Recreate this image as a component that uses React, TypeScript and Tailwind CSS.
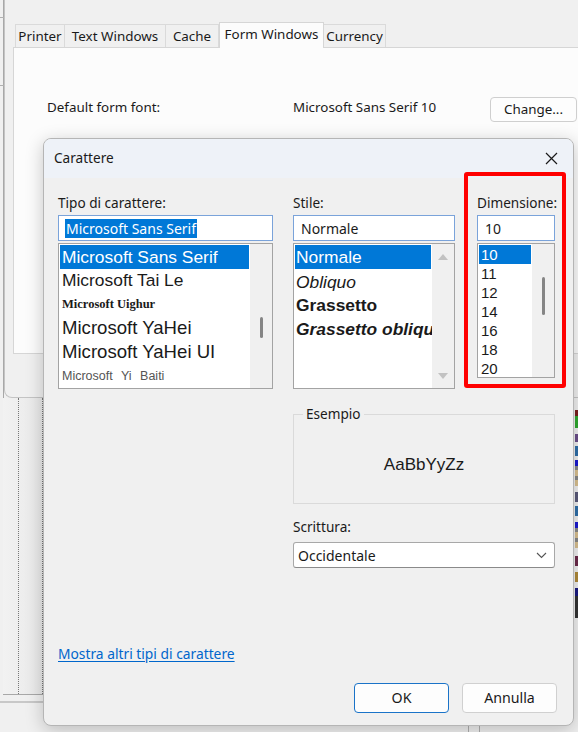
import React from "react";

const ui = "font-['Noto_Sans',sans-serif]";
const arial = "font-['Liberation_Sans',Arial,sans-serif]";

const tabs = [
  { label: "Printer", w: "w-[50px]" },
  { label: "Text Windows", w: "w-[101px]" },
  { label: "Cache", w: "w-[53px]" },
  { label: "Form Windows", w: "w-[105px]", active: true },
  { label: "Currency", w: "w-[62px]" },
];

const sizes = ["10", "11", "12", "14", "16", "18", "20"];

// background property sheet that the font dialog was opened from
const BackWindow: React.FC = () => (
  <div className="absolute left-[4px] top-0 w-[600px] h-[398px] bg-[#f0f0f0] border-l border-b border-[#c4c4c4] rounded-bl-[8px] flex flex-col">
    <div className="flex items-end h-[47px] pl-[10px]">
      {tabs.map((t) =>
        t.active ? (
          <div
            key={t.label}
            className={`${t.w} h-[26px] -mb-px relative z-10 bg-[#fcfcfc] border border-b-0 border-[#d6d6d6] flex items-center justify-center text-[13.4px] text-[#1a1a1a] pb-[3px]`}
          >
            {t.label}
          </div>
        ) : (
          <div
            key={t.label}
            className={`${t.w} h-[23px] bg-[#f0f0f0] border border-b-0 border-l-0 first:border-l border-[#dadada] flex items-center justify-center text-[13.4px] text-[#1a1a1a]`}
          >
            {t.label}
          </div>
        )
      )}
    </div>
    <div className="ml-[8px] h-[307px] bg-[#fcfcfc] border border-[#d6d6d6]">
      <div className="flex items-center mt-[49px] pl-[33px] h-[25px] text-[13.4px] text-[#1a1a1a]">
        <span className="w-[246px] -mt-[4px]">Default form font:</span>
        <span className="w-[197px] -mt-[4px]">Microsoft Sans Serif 10</span>
        <button className="w-[87px] h-[25px] bg-[#fdfdfd] border border-[#cfcfcf] rounded-[4px] text-[13.4px]">
          Change...
        </button>
      </div>
    </div>
  </div>
);

const Scrollbar: React.FC<{ h?: string; mt?: string; arrows?: boolean }> = ({ h, mt, arrows }) => (
  <div className="w-[22px] bg-[#f0f0f0] flex flex-col items-center">
    {arrows ? (
      <>
        <svg width="10" height="6" viewBox="0 0 10 6" className="mt-[10px]">
          <path d="M0 6 L5 0 L10 6 Z" fill="#c2c2c2" />
        </svg>
        <div className="flex-1" />
        <svg width="10" height="6" viewBox="0 0 10 6" className="mb-[9px]">
          <path d="M0 0 L5 6 L10 0 Z" fill="#c2c2c2" />
        </svg>
      </>
    ) : (
      <div className={`${mt} ${h} w-[3px] rounded-full bg-[#858585]`} />
    )}
  </div>
);

const FontDialog: React.FC = () => (
  <div className={`absolute left-[43px] top-[138px] w-[531px] h-[588px] rounded-[8px] bg-[#f0f0f0] border border-[#b5b5b5] shadow-[0_4px_18px_rgba(0,0,0,0.22)] overflow-hidden flex flex-col text-[#1a1a1a] ${ui}`}>
    {/* title bar */}
    <div className="h-[39px] shrink-0 bg-[#eef2f8] flex items-center justify-between pl-[10px] pr-[15px]">
      <span className="text-[13.6px]">Carattere</span>
      <svg width="13" height="13" viewBox="0 0 13 13">
        <path d="M1 1 L12 12 M12 1 L1 12" stroke="#1a1a1a" strokeWidth="1.2" />
      </svg>
    </div>

    {/* annotation box */}
    <div className="absolute left-[420px] top-[33px] w-[102px] h-[216px] border-[4px] border-[#ff0000] rounded-[3px] pointer-events-none" />

    <div className="flex flex-col pl-[14px] flex-1">
      {/* three pickers */}
      <div className="flex mt-[15px]">
        {/* font family */}
        <div className="w-[215px] flex flex-col">
          <div className="h-[20px] leading-[20px] text-[13.6px] mb-[2px]">Tipo di carattere:</div>
          <div className="h-[26px] bg-white border border-[#7aa3da] flex items-center pl-[6px]">
            <span className="bg-[#0078d7] text-white text-[14px] leading-[19px] px-px">Microsoft Sans Serif</span>
          </div>
          <div className="h-[146px] mt-[2px] bg-white border border-[#a3a3a3] flex">
            <div className={`flex-1 flex flex-col pt-px px-px ${arial}`}>
              <div className="h-[24px] bg-[#0078d7] text-white text-[17.4px] leading-[24px] pl-[2px]">Microsoft Sans Serif</div>
              <div className="h-[24px] text-[17.4px] leading-[22px] pl-[2px]">Microsoft Tai Le</div>
              <div className="h-[24px] text-[12.5px] leading-[24px] pl-[2px] font-['Liberation_Serif',serif] font-semibold">Microsoft Uighur</div>
              <div className="h-[24px] text-[18.6px] leading-[24px] pl-[2px]">Microsoft YaHei</div>
              <div className="h-[24px] text-[18.6px] leading-[24px] pl-[2px]">Microsoft YaHei UI</div>
              <div className="h-[24px] text-[12.5px] leading-[24px] pl-[2px] text-[#555] [word-spacing:5px]">Microsoft Yi Baiti</div>
            </div>
            <Scrollbar mt="mt-[73px]" h="h-[21px]" />
          </div>
        </div>

        {/* style */}
        <div className="w-[162px] ml-[20px] flex flex-col">
          <div className="h-[20px] leading-[20px] text-[13.6px] mb-[2px]">Stile:</div>
          <div className="h-[26px] bg-white border border-[#7aa3da] flex items-center pl-[7px] text-[14px]">Normale</div>
          <div className="h-[146px] mt-[2px] bg-white border border-[#a3a3a3] flex">
            <div className={`flex-1 min-w-0 flex flex-col pt-px px-px overflow-hidden whitespace-nowrap ${arial}`}>
              <div className="h-[24px] bg-[#0078d7] text-white text-[17.4px] leading-[24px] pl-px">Normale</div>
              <div className="h-[24px] text-[17.4px] leading-[26px] pl-px italic">Obliquo</div>
              <div className="h-[24px] text-[17.4px] leading-[24px] pl-px font-bold">Grassetto</div>
              <div className="h-[24px] text-[17.4px] leading-[24px] pl-px font-bold italic">Grassetto obliquo</div>
            </div>
            <Scrollbar arrows />
          </div>
        </div>

        {/* size */}
        <div className="w-[78px] ml-[22px] flex flex-col">
          <div className="h-[20px] leading-[20px] text-[13.6px] mb-[2px] whitespace-nowrap">Dimensione:</div>
          <div className="h-[26px] bg-white border border-[#7aa3da] flex items-center pl-[7px] text-[14px]">10</div>
          <div className="h-[135px] mt-[2px] bg-white border border-[#a3a3a3] flex">
            <div className={`flex-1 flex flex-col pt-px px-px ${arial}`}>
              {sizes.map((s, i) => (
                <div
                  key={s}
                  className={`h-[19px] text-[15px] leading-[19px] pl-[2px] ${i === 0 ? "bg-[#0078d7] text-white" : ""}`}
                >
                  {s}
                </div>
              ))}
            </div>
            <Scrollbar mt="mt-[33px]" h="h-[38px]" />
          </div>
        </div>
      </div>

      {/* sample + script */}
      <div className="flex">
        <div className="w-[235px]" />
        <div className="w-[262px] flex flex-col">
          <fieldset className="mt-[16px] h-[99px] border border-[#dadada] text-center">
            <legend className="ml-[9px] px-[3px] text-[13.6px] leading-[18px] text-left">Esempio</legend>
            <div className={`${arial} text-[17px] leading-[20px] pt-[32px]`}>AaBbYyZz</div>
          </fieldset>
          <div className="mt-[13px] h-[20px] leading-[20px] text-[13.6px]">Scrittura:</div>
          <div className="mt-[5px] h-[26px] bg-white border border-[#a8a8a8] border-b-[#8a8a8a] rounded-[3px] flex items-center justify-between pl-[4px] pr-[7px] text-[14px]">
            <span>Occidentale</span>
            <svg width="11" height="7" viewBox="0 0 11 7">
              <path d="M1 1 L5.5 5.5 L10 1" stroke="#555" strokeWidth="1.1" fill="none" />
            </svg>
          </div>
        </div>
      </div>

      <div className="mt-[75px] h-[20px] leading-[20px]">
        <span className="text-[13.8px] text-[#0066cc] underline underline-offset-2">Mostra altri tipi di carattere</span>
      </div>

      <div className="flex justify-end gap-[13px] mt-[20px] pr-[16px]">
        <button className="w-[95px] h-[30px] bg-[#fdfdfd] border-[1.5px] border-[#1a73c8] rounded-[4px] text-[14.2px]">OK</button>
        <button className="w-[95px] h-[30px] bg-[#fdfdfd] border border-[#d0d0d0] rounded-[4px] text-[14.2px]">Annulla</button>
      </div>
    </div>
  </div>
);

const rightStrip = [
  { c: "bg-[#7a2020]", h: "h-[6px]" },
  { c: "bg-[#2ea82e]", h: "h-[12px]" },
  { c: "bg-transparent", h: "h-[6px]" },
  { c: "bg-[#6b4e8a]", h: "h-[8px]" },
  { c: "bg-transparent", h: "h-[4px]" },
  { c: "bg-[#2f6fa8]", h: "h-[10px]" },
  { c: "bg-transparent", h: "h-[4px]" },
  { c: "bg-[#1b1bd0]", h: "h-[6px]" },
  { c: "bg-[#888]", h: "h-[4px]" },
  { c: "bg-[#d9c090]", h: "h-[6px]" },
  { c: "bg-[#888]", h: "h-[4px]" },
  { c: "bg-[#d9c090]", h: "h-[6px]" },
  { c: "bg-transparent", h: "h-[6px]" },
  { c: "bg-[#5a5a7a]", h: "h-[10px]" },
  { c: "bg-transparent", h: "h-[4px]" },
  { c: "bg-[#2f6fa8]", h: "h-[10px]" },
  { c: "bg-transparent", h: "h-[6px]" },
  { c: "bg-[#1b1bd0]", h: "h-[6px]" },
  { c: "bg-[#888]", h: "h-[4px]" },
  { c: "bg-[#d9c090]", h: "h-[6px]" },
  { c: "bg-[#888]", h: "h-[4px]" },
  { c: "bg-[#d9c090]", h: "h-[6px]" },
  { c: "bg-transparent", h: "h-[8px]" },
  { c: "bg-[#6b2a4a]", h: "h-[10px]" },
  { c: "bg-transparent", h: "h-[6px]" },
  { c: "bg-[#b08a3a]", h: "h-[10px]" },
  { c: "bg-transparent", h: "h-[6px]" },
  { c: "bg-[#1b1b80]", h: "h-[8px]" },
  { c: "bg-[#333]", h: "h-[22px]" },
];

export default function App() {
  return (
    <div className={`relative w-[578px] h-[732px] overflow-hidden bg-[#f0f0f0] ${ui}`}>
      {/* underlying application */}
      <div className="absolute left-[3px] top-0 w-px h-[694px] bg-[#a8a8a8]" />
      <div className="absolute left-0 top-[17px] w-[4px] h-px bg-[#b0b0b0]" />
      <div className="absolute left-0 top-[85px] w-[4px] h-px bg-[#b0b0b0]" />
      <div className="absolute left-[3px] top-[398px] w-[60px] h-[297px] bg-gradient-to-r from-[#f2f2f2] to-[#e4e4e4] border-b border-[#a8a8a8]">
        <div className="absolute left-[15px] top-0 h-full border-l border-dotted border-[#777]" />
        <div className="absolute left-[39px] top-0 h-full border-l border-dotted border-[#777]" />
      </div>
      <div className="absolute left-0 top-[701px] w-[60px] h-[2px] bg-[#c8c8c8]" />
      <div className="absolute left-[468px] top-[720px] w-px h-[12px] bg-[#b0b0b0]" />
      <div className="absolute left-[479px] top-[720px] w-px h-[12px] bg-[#b0b0b0]" />
      <div className="absolute left-[575px] top-[410px] w-[3px] flex flex-col">
        {rightStrip.map((s, i) => (
          <div key={i} className={`${s.c} ${s.h}`} />
        ))}
      </div>

      <BackWindow />
      <FontDialog />
    </div>
  );
}
